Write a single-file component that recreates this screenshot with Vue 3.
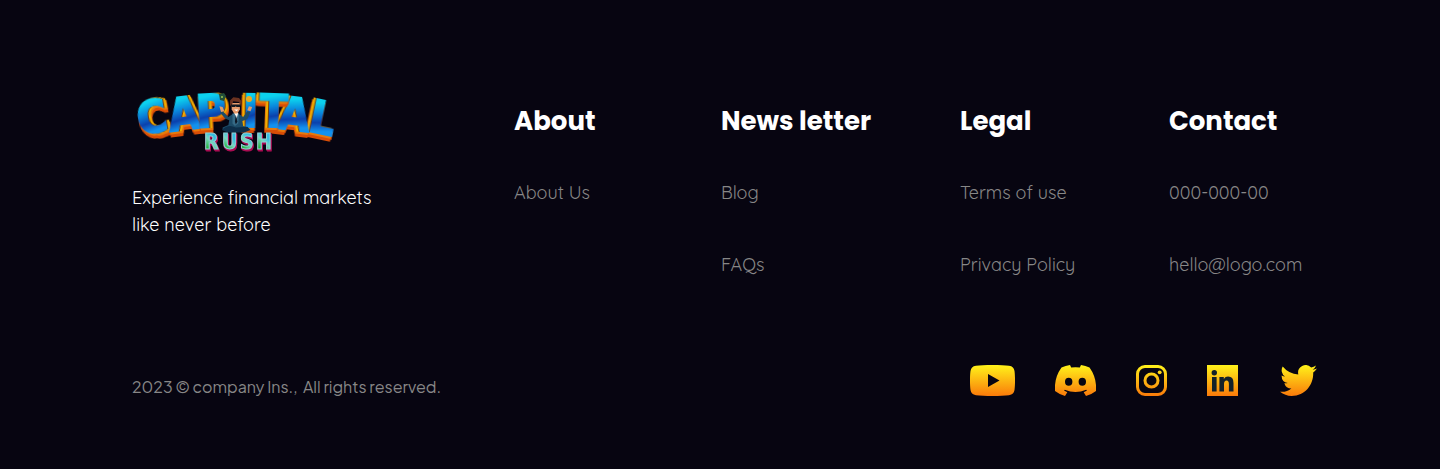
<script setup>
const columns = [
  { title: 'About', links: ['About Us'] },
  { title: 'News letter', links: ['Blog', 'FAQs'] },
  { title: 'Legal', links: ['Terms of use', 'Privacy Policy'] },
  { title: 'Contact', links: ['000-000-00', 'hello@logo.com'] },
]
const letters = [
  { c: 'C', x: 5, y: 49, r: -10, side: 'from-left' },
  { c: 'A', x: 36, y: 46, r: -7, side: 'from-left' },
  { c: 'P', x: 64, y: 43, r: -3, side: 'from-left' },
  { c: 'L', x: 178, y: 50, r: 12, side: 'from-right' },
  { c: 'A', x: 147, y: 46, r: 7, side: 'from-right' },
  { c: 'T', x: 128, y: 43, r: 2, side: 'from-right' },
  { c: 'I', x: 111, y: 43, r: 1, side: 'from-right' },
]
const rush = [
  { c: 'R', x: 72 },
  { c: 'U', x: 90 },
  { c: 'S', x: 108 },
  { c: 'H', x: 124 },
]
</script>

<template>
  <footer class="footer">
    <div class="top">
      <div class="brand">
        <a href="#" class="logo" aria-label="Capital Rush">
          <svg width="210" height="76" viewBox="0 0 210 76">
            <defs>
              <linearGradient id="blue" x1="0" y1="0" x2="0.1" y2="1">
                <stop offset="0.25" stop-color="#0cd2ee" />
                <stop offset="0.45" stop-color="#0a86dc" />
                <stop offset="0.63" stop-color="#0b40ac" />
                <stop offset="0.8" stop-color="#1292ee" />
              </linearGradient>
              <linearGradient id="rush" x1="0.8" y1="0" x2="0.2" y2="1">
                <stop offset="0.3" stop-color="#35bfe4" />
                <stop offset="0.5" stop-color="#79d9c0" />
                <stop offset="0.8" stop-color="#22b43a" />
              </linearGradient>
            </defs>
            <g class="big">
              <text v-for="l in letters" :key="l.x" :class="l.side" :x="l.x" :y="l.y" :transform="`rotate(${l.r} ${l.x + 14} ${l.y - 16})`">{{ l.c }}</text>
            </g>
            <circle cx="117" cy="15" r="3" fill="#e8ad24" />
            <path d="M87 10l5-1 2 3-2 5-4-1z" fill="#234e39" />
            <circle cx="90" cy="13" r="1" fill="#9ccb53" />
            <g transform="translate(18.500 5) scale(.82)">
              <path d="M86 26l4 3 5 5 6-4h6l6 4 5-7 4 1-4 9-6 2 1 6 6 2v3l-10 1H98l-10-1v-3l7-3 1-6-5-2-6-7z" fill="#1d4c68" />
              <path d="M100 30h8l-1 12-4 3-3-3z" fill="#366a86" />
              <path d="M102 29h5l-2 7z" fill="#fff" />
              <path d="M104 31l2 9-2 3-1-3z" fill="#0d1624" />
              <path d="M87 50q8-8 17-3l14-1 4 4-8 3H94z" fill="#0d2e49" />
              <path d="M84 21l4 1 2 5-4 1zM118 26l2-5 4 1-2 5z" fill="#df9e6d" />
              <path d="M99 17h10v8l-3 5h-4l-3-5z" fill="#e69b6c" />
              <path d="M97 20v-6l4-4 7 1 3 4-1 6-2-5-7-1-2 5z" fill="#6b3220" />
              <path d="M98 19h12l-1 3h-4l-1-1-1 1h-4z" fill="#111923" />
              <path d="M102 25h5l-2 2z" fill="#fff" />
            </g>
            <g class="small">
              <text v-for="l in rush" :key="l.x" :x="l.x" y="65">{{ l.c }}</text>
            </g>
          </svg>
        </a>
        <p class="tagline">Experience financial markets<br />like never before</p>
      </div>
      <nav v-for="col in columns" :key="col.title" class="column" :aria-label="col.title">
        <h2>{{ col.title }}</h2>
        <ul>
          <li v-for="link in col.links" :key="link"><a href="#">{{ link }}</a></li>
        </ul>
      </nav>
    </div>

    <div class="bottom">
      <p class="copyright">2023 © company Ins.,&nbsp; All rights reserved.</p>
      <div class="social">
        <a href="#" aria-label="YouTube">
          <svg width="45" height="31" viewBox="0 0 45 31">
            <defs>
              <linearGradient id="gold" gradientUnits="userSpaceOnUse" x1="0" y1="0" x2="0" y2="31">
                <stop offset="0" stop-color="#fff31a" />
                <stop offset="1" stop-color="#fa7a0a" />
              </linearGradient>
            </defs>
            <path fill="url(#gold)" fill-rule="evenodd" d="M22.500 0c7 0 13 .3 16.500.8 3.500.5 5 2.200 5.500 5.200.7 5 .7 14 0 19-.5 3-2 4.700-5.500 5.200-7 1-26 1-33 0C2.500 29.700 1 28 .5 25c-.7-5-.7-14 0-19C1 3 2.500 1.300 6 .8 9.500.3 15.500 0 22.500 0zM18 9v13l11.500-6.500z" />
          </svg>
        </a>
        <a href="#" aria-label="Discord">
          <svg width="41" height="31" viewBox="0 0 41 31">
            <path fill="url(#gold)" fill-rule="evenodd" d="M15 0l1.200 2.500q4.300-.7 8.600 0L26 0q4.500.7 8.500 2.600Q42 13 41 26q-4.500 3.500-10 5l-2.300-3.800 3.300-1.700-.8-.7q-10.700 4.500-21.400 0l-.8.7 3.300 1.700L10 31q-5.500-1.500-10-5Q-1 13 6.500 2.600 10.500.7 15 0zM13.700 12.700a3.700 4 0 1 0 0 8 3.700 4 0 0 0 0-8zm13.600 0a3.700 4 0 1 0 0 8 3.700 4 0 0 0 0-8z" />
          </svg>
        </a>
        <a href="#" aria-label="Instagram">
          <svg width="31" height="31" viewBox="0 0 31 31">
            <rect x="1.500" y="1.500" width="28" height="28" rx="7.500" fill="none" stroke="url(#gold)" stroke-width="3" />
            <circle cx="15.500" cy="15.500" r="6.500" fill="none" stroke="url(#gold)" stroke-width="3" />
            <circle cx="23.700" cy="7.300" r="1.900" fill="url(#gold)" />
          </svg>
        </a>
        <a href="#" aria-label="LinkedIn">
          <svg width="31" height="31" viewBox="0 0 31 31">
            <path fill="url(#gold)" d="M0 0h31v31H0z" />
            <circle cx="7.300" cy="7.800" r="2.700" fill="#132129" />
            <path fill="#132129" d="M5 12h4.600v14.500H5zM12.400 12h4.400v2q1.500-2.400 4.300-2.400 5.400 0 5.400 6.400v8.500h-4.600V19q0-3.500-2.300-3.500-2.600 0-2.600 3.500v7.500h-4.600z" />
          </svg>
        </a>
        <a href="#" aria-label="Twitter">
          <svg width="39" height="31" viewBox="-2 0 39 31">
            <path fill="url(#gold)" d="M37 3.600a15 15 0 0 1-4.300 1.200A7.600 7.600 0 0 0 36 .6a15 15 0 0 1-4.800 1.900A7.600 7.600 0 0 0 18.300 9.400 21.500 21.500 0 0 1 2.700 1.500a7.600 7.600 0 0 0 2.300 10.100 7.500 7.500 0 0 1-3.400-1v.1a7.600 7.600 0 0 0 6.100 7.400 7.600 7.600 0 0 1-3.400.1 7.600 7.600 0 0 0 7.100 5.300A15.200 15.200 0 0 1 0 26.700 21.500 21.500 0 0 0 11.600 31C25.600 31 33.700 19 33.200 7.500A15.400 15.400 0 0 0 37 3.600z" />
          </svg>
        </a>
      </div>
    </div>
  </footer>
</template>

<style>
body {
  background: #070511;
}
</style>

<style scoped>
.footer {
  padding: 84px 123px 72px 132px;
  color: #fff;
  font-family: Quicksand, Inter, "Open Sans", sans-serif;
  font-size: 18px;
  font-weight: 400;
  line-height: 27px;
}
.top {
  display: grid;
  grid-template-columns: 382fr 207fr 239fr 209fr 148fr;
}
p, ul, h2 {
  margin: 0;
  padding: 0;
}
ul {
  list-style: none;
}
a {
  color: inherit;
  text-decoration: none;
}
svg {
  display: block;
}
.logo {
  display: block;
  margin-bottom: 24px;
}
.column {
  padding-top: 17px;
  white-space: nowrap;
}
h2 {
  margin-bottom: 38px;
  font-family: Poppins, Inter, sans-serif;
  font-size: 26px;
  font-weight: 700;
  line-height: 40px;
}
ul {
  display: grid;
  gap: 45px;
  color: #878787;
}
.bottom {
  display: flex;
  justify-content: space-between;
  align-items: center;
  margin-top: 83px;
}
.copyright {
  color: #878787;
  font-family: "Plus Jakarta Sans", Inter, sans-serif;
  font-size: 16px;
  font-weight: 400;
  padding-top: 12px;
}
.social {
  display: flex;
  gap: 40px;
}
.big {
  font: 700 45px "DejaVu Sans Condensed", "DejaVu Sans", sans-serif;
  fill: url(#blue);
  stroke: url(#blue);
  stroke-width: 2px;
}
.from-left {
  filter: drop-shadow(1px 0 0 #7a3a08) drop-shadow(2px 0 0 #efb000) drop-shadow(1px 2px 0 #e8790a) drop-shadow(0 3px 0 #d94d06);
}
.from-right {
  filter: drop-shadow(-1px 0 0 #7a3a08) drop-shadow(-2px 0 0 #efb000) drop-shadow(-1px 2px 0 #e8790a) drop-shadow(0 3px 0 #d94d06);
}
.small {
  font: 700 21px "DejaVu Sans Condensed", "DejaVu Sans", sans-serif;
  fill: url(#rush);
  stroke: #8fd0d6;
  stroke-width: 1px;
  filter: drop-shadow(1px 1px 0 #a90c51) drop-shadow(0 1px 0 #a90c51);
}
</style>
